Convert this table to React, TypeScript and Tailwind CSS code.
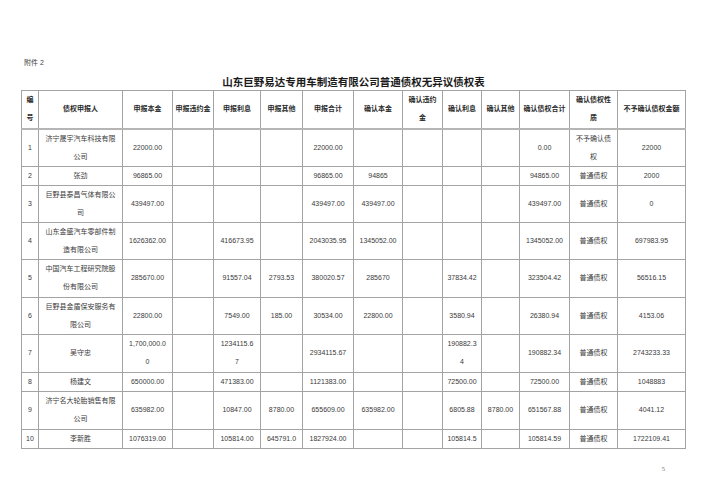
import React from "react";

type Row = {
  h: number;
  cells: React.ReactNode[];
};

const br = (a: string, b: string) => (
  <>
    {a}
    <br />
    {b}
  </>
);

const widths = [
  "w-[17px]",
  "w-[84px]",
  "w-[50px]",
  "w-[41px]",
  "w-[47px]",
  "w-[42px]",
  "w-[51px]",
  "w-[49px]",
  "w-[40px]",
  "w-[39px]",
  "w-[38px]",
  "w-[50px]",
  "w-[48px]",
  "w-[68px]",
];

const header: React.ReactNode[] = [
  br("编", "号"),
  "债权申报人",
  "申报本金",
  "申报违约金",
  "申报利息",
  "申报其他",
  "申报合计",
  "确认本金",
  br("确认违约", "金"),
  "确认利息",
  "确认其他",
  "确认债权合计",
  br("确认债权性", "质"),
  "不予确认债权金额",
];

const rows: Row[] = [
  {
    h: 37,
    cells: ["1", br("济宁晟宇汽车科技有限", "公司"), "22000.00", "", "", "", "22000.00", "", "", "", "", "0.00", br("不予确认债", "权"), "22000"],
  },
  {
    h: 19,
    cells: ["2", "张劲", "96865.00", "", "", "", "96865.00", "94865", "", "", "", "94865.00", "普通债权", "2000"],
  },
  {
    h: 37,
    cells: ["3", br("巨野县泰昌气体有限公", "司"), "439497.00", "", "", "", "439497.00", "439497.00", "", "", "", "439497.00", "普通债权", "0"],
  },
  {
    h: 37,
    cells: ["4", br("山东金盛汽车零部件制", "造有限公司"), "1626362.00", "", "416673.95", "", "2043035.95", "1345052.00", "", "", "", "1345052.00", "普通债权", "697983.95"],
  },
  {
    h: 38,
    cells: ["5", br("中国汽车工程研究院股", "份有限公司"), "285670.00", "", "91557.04", "2793.53", "380020.57", "285670", "", "37834.42", "", "323504.42", "普通债权", "56516.15"],
  },
  {
    h: 37,
    cells: ["6", br("巨野县金盾保安服务有", "限公司"), "22800.00", "", "7549.00", "185.00", "30534.00", "22800.00", "", "3580.94", "", "26380.94", "普通债权", "4153.06"],
  },
  {
    h: 38,
    cells: ["7", "吴守忠", br("1,700,000.0", "0"), "", br("1234115.6", "7"), "", "2934115.67", "", "", br("190882.3", "4"), "", "190882.34", "普通债权", "2743233.33"],
  },
  {
    h: 18,
    cells: ["8", "杨建文", "650000.00", "", "471383.00", "", "1121383.00", "", "", "72500.00", "", "72500.00", "普通债权", "1048883"],
  },
  {
    h: 38,
    cells: ["9", br("济宁名大轮胎销售有限", "公司"), "635982.00", "", "10847.00", "8780.00", "655609.00", "635982.00", "", "6805.88", "8780.00", "651567.88", "普通债权", "4041.12"],
  },
  {
    h: 19,
    cells: ["10", "李新胜", "1076319.00", "", "105814.00", "645791.0", "1827924.00", "", "", "105814.5", "", "105814.59", "普通债权", "1722109.41"],
  },
];

const rowH: Record<number, string> = {
  18: "h-[18px]",
  19: "h-[19px]",
  37: "h-[37px]",
  38: "h-[38px]",
};

export default function App() {
  return (
    <div
      className="w-[707px] h-[500px] bg-white text-[#3a3a3a] overflow-hidden px-[21px]"
      style={{ fontFamily: '"Liberation Sans", "Noto Sans CJK SC", sans-serif' }}
    >
      <div className="pt-[58px] pl-[3px] text-[7px] leading-[10px] text-[#444]">附件 2</div>
      <div className="mt-[8px] text-center text-[10.5px] leading-[13px] font-bold text-[#1a1a1a]">
        山东巨野易达专用车制造有限公司普通债权无异议债权表
      </div>
      <table className="mt-px w-[664px] table-fixed border-collapse text-[7px] leading-[18px]">
        <colgroup>
          {widths.map((w, i) => (
            <col key={i} className={w} />
          ))}
        </colgroup>
        <thead>
          <tr className="h-[38px]">
            {header.map((c, i) => (
              <th
                key={i}
                className="border border-[#a3a3a3] border-b-2 border-b-[#b5b5b5] px-[1px] text-center align-middle font-bold text-[#2a2a2a] whitespace-nowrap overflow-hidden"
              >
                {c}
              </th>
            ))}
          </tr>
        </thead>
        <tbody>
          {rows.map((r, ri) => (
            <tr key={ri} className={rowH[r.h]}>
              {r.cells.map((c, ci) => (
                <td
                  key={ci}
                  className="border border-[#a3a3a3] px-[1px] text-center align-middle whitespace-nowrap overflow-hidden"
                >
                  {c}
                </td>
              ))}
            </tr>
          ))}
        </tbody>
      </table>
      <div
        className="mt-[16px] pr-[21px] text-right text-[7px] leading-[8px] text-[#777]"
        style={{ fontFamily: '"Liberation Serif", serif' }}
      >
        5
      </div>
    </div>
  );
}
